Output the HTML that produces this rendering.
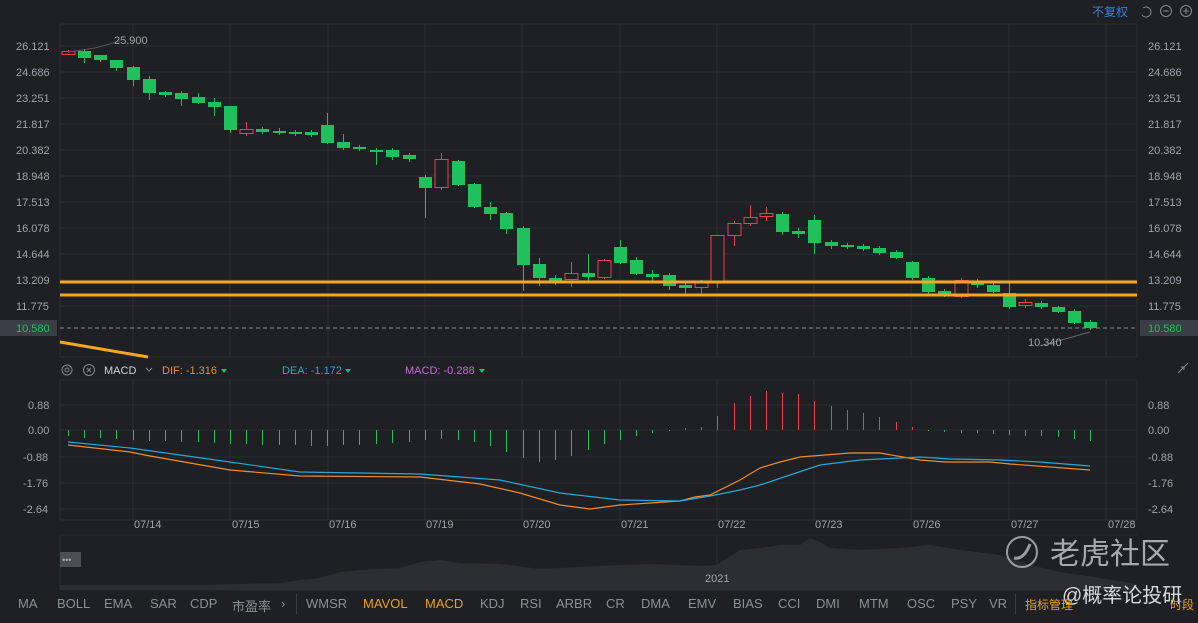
<!DOCTYPE html>
<html><head><meta charset="utf-8"><style>
html,body{margin:0;padding:0;background:#1e2024;width:1198px;height:623px;overflow:hidden;font-family:"Liberation Sans","Noto Sans CJK SC",sans-serif}
svg{position:absolute;left:0;top:0}
.tb{position:absolute;top:596px;left:0;width:1198px;height:20px;font-size:13px;color:#8a8f98}
.tb span{position:absolute;top:0}
</style></head><body>
<svg id="s" width="1198" height="623" xmlns="http://www.w3.org/2000/svg" font-family="Liberation Sans, Noto Sans CJK SC, sans-serif">
<rect x="0" y="0" width="1198" height="623" fill="#1e2024"/>
<g id="grid" stroke="#2a2d32" stroke-width="1"></g>
<g id="vol"></g>
<g id="cand"></g>
<g id="hist"></g>
<line x1="60" y1="282" x2="1137" y2="282" stroke="#f5a623" stroke-width="3"/>
<line x1="60" y1="295" x2="1137" y2="295" stroke="#f5a623" stroke-width="3"/>
<line x1="60" y1="328" x2="1137" y2="328" stroke="#888" stroke-width="1" stroke-dasharray="4,3"/>
<polyline points="60,342 148,357" stroke="#f5a623" stroke-width="3" fill="none"/>
<polyline points="1040,346 1090,332" stroke="#666" stroke-width="1" fill="none"/>
<polyline points="68,52 95,48 120,41" stroke="#555" stroke-width="1" fill="none"/>
<polyline fill="none" stroke="#f08c2c" stroke-width="1.2" points="68,445 130,452 150,456 230,470 300,476 420,477 480,484 520,493 560,505 590,509 620,505 680,501 695,497 710,495 740,480 760,468 780,462 800,457 850,453 880,453 920,460 945,462 990,462 1010,464 1090,470"/>
<polyline fill="none" stroke="#2aa7d6" stroke-width="1.2" points="68,442 130,448 230,462 300,472 420,474 500,480 560,493 620,500 680,501 710,496 740,490 760,485 790,475 820,465 860,460 880,459 920,457 950,459 1000,460 1040,462 1090,466"/>
<g font-size="11" fill="#a0a4ab">
<text x="16" y="50">26.121</text><text x="16" y="76">24.686</text><text x="16" y="102">23.251</text><text x="16" y="128">21.817</text><text x="16" y="154">20.382</text><text x="16" y="180">18.948</text><text x="16" y="206">17.513</text><text x="16" y="232">16.078</text><text x="16" y="258">14.644</text><text x="16" y="284">13.209</text><text x="16" y="310">11.775</text>
<text x="1148" y="50">26.121</text><text x="1148" y="76">24.686</text><text x="1148" y="102">23.251</text><text x="1148" y="128">21.817</text><text x="1148" y="154">20.382</text><text x="1148" y="180">18.948</text><text x="1148" y="206">17.513</text><text x="1148" y="232">16.078</text><text x="1148" y="258">14.644</text><text x="1148" y="284">13.209</text><text x="1148" y="310">11.775</text>
<text x="114" y="44">25.900</text><text x="1028" y="346">10.340</text>
<text x="28" y="409">0.88</text><text x="28" y="434">0.00</text><text x="23" y="461">-0.88</text><text x="23" y="487">-1.76</text><text x="23" y="513">-2.64</text>
<text x="1148" y="409">0.88</text><text x="1148" y="434">0.00</text><text x="1148" y="461">-0.88</text><text x="1148" y="487">-1.76</text><text x="1148" y="513">-2.64</text>
<text x="134" y="528">07/14</text><text x="232" y="528">07/15</text><text x="329" y="528">07/16</text><text x="426" y="528">07/19</text><text x="523" y="528">07/20</text><text x="621" y="528">07/21</text><text x="718" y="528">07/22</text><text x="815" y="528">07/23</text><text x="913" y="528">07/26</text><text x="1011" y="528">07/27</text><text x="1108" y="528">07/28</text>
<text x="705" y="582">2021</text>
</g>
<rect x="0" y="320" width="57" height="16" fill="#3a3e45"/><text x="16" y="332" font-size="11" fill="#1fc15c">10.580</text>
<rect x="1140" y="320" width="58" height="16" fill="#3a3e45"/><text x="1148" y="332" font-size="11" fill="#1fc15c">10.580</text>
<text x="1092" y="16" font-size="12" fill="#3d7fd6">不复权</text>
<path d="M1143 8 a5 5 0 1 1 -1 7" stroke="#888" fill="none"/><circle cx="1166" cy="11" r="5.5" stroke="#888" fill="none"/><line x1="1163" y1="11" x2="1169" y2="11" stroke="#888"/>
<circle cx="1186" cy="11" r="5.5" stroke="#888" fill="none"/><line x1="1183" y1="11" x2="1189" y2="11" stroke="#888"/><line x1="1186" y1="8" x2="1186" y2="14" stroke="#888"/>
<circle cx="67" cy="370" r="5" stroke="#888" fill="none"/><circle cx="67" cy="370" r="2" stroke="#888" fill="none"/>
<circle cx="89" cy="370" r="5.5" stroke="#888" fill="none"/><path d="M87 368 l4 4 M91 368 l-4 4" stroke="#888"/>
<text x="104" y="374" font-size="11" fill="#d0d3d8">MACD</text><path d="M146 368 l3 3 l3 -3" stroke="#888" fill="none"/>
<text x="162" y="374" font-size="11" fill="#f08c2c">DIF: -1.316</text><path d="M221 369 h6 l-3 4z" fill="#1fc15c"/>
<text x="282" y="374" font-size="11" fill="#2aa7d6">DEA: -1.172</text><path d="M345 369 h6 l-3 4z" fill="#1fc15c"/>
<text x="405" y="374" font-size="11" fill="#c66bd6">MACD: -0.288</text><path d="M479 369 h6 l-3 4z" fill="#1fc15c"/>
<path d="M1178 373 l6 -6 M1184 367 v3 M1184 367 h-3 M1188 363 l-4 4" stroke="#888" fill="none"/>
<rect x="60" y="552" width="21" height="15" fill="#4a4e55"/><text x="62" y="563" font-size="9" fill="#aaa">•••</text>
<circle cx="1022" cy="552" r="15" stroke="#9a9ea4" stroke-width="2" fill="none"/>
<path d="M1014 558 q10 2 16 -14" stroke="#9a9ea4" stroke-width="3" fill="none"/>
<text x="1050" y="564" font-size="30" fill="#b5b8bd" opacity="0.9">老虎社区</text>
<text x="1062" y="602" font-size="20" fill="#d8dadd">@概率论投研</text>
</svg>
<div class="tb">
<span style="left:18px">MA</span><span style="left:57px">BOLL</span><span style="left:104px">EMA</span><span style="left:150px">SAR</span><span style="left:190px">CDP</span><span style="left:232px">市盈率</span><span style="left:281px">›</span>
<span style="left:296px;top:-2px;height:20px;border-left:1px solid #3a3d43"></span>
<span style="left:306px">WMSR</span><span style="left:363px;color:#e8a020">MAVOL</span><span style="left:425px;color:#e8a020">MACD</span><span style="left:480px">KDJ</span><span style="left:520px">RSI</span><span style="left:556px">ARBR</span><span style="left:606px">CR</span><span style="left:641px">DMA</span><span style="left:688px">EMV</span><span style="left:733px">BIAS</span><span style="left:778px">CCI</span><span style="left:816px">DMI</span><span style="left:859px">MTM</span><span style="left:907px">OSC</span><span style="left:951px">PSY</span><span style="left:989px">VR</span>
<span style="left:1015px;top:-2px;height:20px;border-left:1px solid #3a3d43"></span>
<span style="left:1025px;color:#e8a020;font-size:12px">指标管理</span><span style="left:1170px;color:#e8a020;font-size:12px">时段</span>
</div>
<script>
var NS="http://www.w3.org/2000/svg";
function el(p,t,a){var e=document.createElementNS(NS,t);for(var k in a)e.setAttribute(k,a[k]);document.getElementById(p).appendChild(e);return e;}
[24,46,72,98,124,150,176,202,228,254,280,306,357,380,405,430,457,483,509,520,535,590].forEach(function(y){el("grid","line",{x1:60,y1:y,x2:1137,y2:y});});
[60,133,230,328,425,522,620,717,814,911,1009,1106,1137].forEach(function(x){el("grid","line",{x1:x,y1:24,x2:x,y2:357});el("grid","line",{x1:x,y1:380,x2:x,y2:520});});
el("grid","line",{x1:60,y1:535,x2:60,y2:590});el("grid","line",{x1:717,y1:535,x2:717,y2:570});
var C=[[68,51,54,50,55,1],[84,51,58,49,63,0],[100,55,60,55,62,0],[116,60,68,60,71,0],[133,67,80,66,86,0],[149,79,93,76,100,0],[165,92,95,91,97,0],[181,93,99,91,106,0],[198,97,103,93,104,0],[214,102,107,98,116,0],[230,106,130,106,133,0],[246,129,133,122,136,1],[262,129,132,127,134,0],[279,131,133,128,135,0],[295,132,134,130,136,0],[311,132,135,130,137,0],[327,125,143,113,144,0],[343,142,148,134,150,0],[359,147,149,145,151,0],[376,150,152,148,165,0],[392,150,157,148,160,0],[409,155,159,153,162,0],[425,177,188,175,218,0],[441,159,187,153,190,1],[458,161,185,160,186,0],[474,184,207,183,208,0],[490,207,214,202,220,0],[506,213,229,212,234,0],[523,228,265,226,291,0],[539,264,278,258,286,0],[555,278,282,275,285,0],[571,273,279,262,287,1],[588,273,277,254,282,0],[604,260,277,259,279,1],[620,247,263,240,264,0],[636,260,274,257,275,0],[652,274,277,270,281,0],[669,275,286,273,290,0],[685,285,288,283,295,0],[701,281,287,280,294,1],[717,235,282,235,288,1],[734,223,235,221,246,1],[750,217,223,205,226,1],[766,213,216,207,221,1],[782,214,232,212,235,0],[798,231,234,228,238,0],[814,220,243,215,254,0],[831,242,246,240,249,0],[847,245,247,243,249,0],[863,246,249,244,251,0],[879,248,253,246,255,0],[896,252,258,250,259,0],[912,262,278,261,280,0],[928,278,292,276,294,0],[944,291,295,289,297,0],[961,280,296,278,298,1],[977,282,285,279,288,0],[993,285,292,283,293,0],[1009,293,307,283,309,0],[1025,302,305,299,308,1],[1041,303,307,301,309,0],[1058,307,312,306,313,0],[1074,311,323,309,324,0],[1090,322,328,320,330,0]];
C.forEach(function(c){var col=c[5]?"#e9414d":"#1fc15c";
el("cand","line",{x1:c[0]+.5,y1:c[3],x2:c[0]+.5,y2:c[4],stroke:col});
if(c[5])el("cand","rect",{x:c[0]-6,y:c[1]+.5,width:13,height:Math.max(c[2]-c[1],2),fill:"#1e2024",stroke:col});
else el("cand","rect",{x:c[0]-6,y:c[1],width:13,height:Math.max(c[2]-c[1],2),fill:col});
});
var H=[-6,-8,-8,-9,-10,-11,-11,-12,-12,-13,-14,-14,-15,-15,-15,-16,-16,-15,-15,-14,-13,-12,-10,-9,-10,-12,-16,-22,-28,-32,-30,-26,-20,-14,-10,-6,-3,-1,2,3,14,27,34,39,37,36,29,24,20,17,13,8,3,-1,-2,-3,-3,-4,-5,-6,-6,-7,-9,-11];
H.forEach(function(h,i){var x=C[i][0]+.5;if(Math.abs(h)<1)return;
el("hist","line",{x1:x,y1:430,x2:x,y2:430-h,stroke:h>0?"#e9414d":"#1fc15c","stroke-width":1});});
el("vol","polygon",{points:"60,590 60,585 200,585 280,583 300,580 320,578 340,572 360,570 400,568 420,562 440,560 460,563 500,564 540,569 600,566 650,564 700,566 717,565 740,550 760,548 780,545 800,545 810,538 820,542 830,548 860,550 900,548 930,545 960,550 1000,555 1030,565 1060,572 1100,578 1137,584 1137,590",fill:"#2b2e32"});
</script>
</body></html>
